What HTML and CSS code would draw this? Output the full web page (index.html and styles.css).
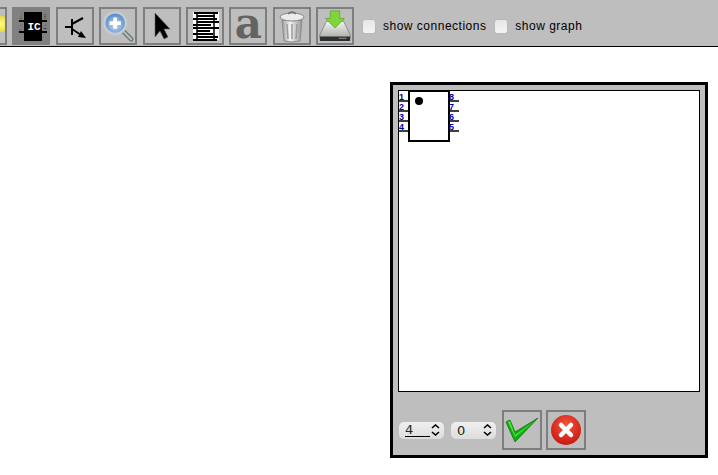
FILE: index.html
```html
<!DOCTYPE html>
<html lang="en">
<head>
  <meta charset="UTF-8">
  <title>Schematic editor</title>
  <link rel="stylesheet" href="styles.css">
</head>
<body>
  <div class="toolbar">
    <button class="tool tool-first">
      <svg width="34" height="34" viewBox="0 0 34 34"><defs><radialGradient id="bulb"><stop offset="0" stop-color="#fffb8a"/><stop offset="1" stop-color="#e8dc3a"/></radialGradient></defs><circle cx="30" cy="15" r="8" fill="url(#bulb)"/></svg>
    </button>
    <button class="tool tool-active">
      <svg width="34" height="34" viewBox="0 0 34 34">
        <rect x="10" y="3" width="18" height="29" fill="#000"/>
        <path d="M5 12h5M5 23h5M28 12h5M28 23h5" stroke="#000" stroke-width="2"/>
        <text x="20" y="20.500" class="chip-name">IC</text>
        <text x="5" y="10" class="chip-pin">1</text>
        <text x="29" y="10" class="chip-pin">8</text>
        <text x="5" y="21" class="chip-pin">2</text>
        <text x="29" y="21" class="chip-pin">4</text>
      </svg>
    </button>
    <button class="tool">
      <svg width="34" height="34" viewBox="0 0 34 34">
        <path d="M7 18h7M14 10v16M14 15l11-6M14 20l9 6" stroke="#000" stroke-width="2" fill="none"/>
        <path d="M28 29l-8-1 3-6z" fill="#000"/>
      </svg>
    </button>
    <button class="tool">
      <svg width="36" height="36" viewBox="0 0 36 36">
        <defs><radialGradient id="lens" cx="0.5" cy="0.6" r="0.6"><stop offset="0" stop-color="#c2dcf2"/><stop offset="1" stop-color="#4a7fc4"/></radialGradient></defs>
        <path d="M24 24l8 8" stroke="#6f7a7a" stroke-width="5" stroke-linecap="round"/>
        <path d="M24 24l8 8" stroke="#b8c0bc" stroke-width="2" stroke-linecap="round"/>
        <circle cx="15" cy="15" r="11.500" fill="url(#lens)" stroke="#c3ccd3" stroke-width="2.500"/>
        <path d="M13 9h4v4h4v4h-4v4h-4v-4H9v-4h4z" fill="#fff"/>
      </svg>
    </button>
    <button class="tool">
      <svg width="34" height="34" viewBox="0 0 34 34">
        <path d="M10 4v24l5-6 4 8 4-2-4-8h6z" fill="#000" stroke="#666" stroke-width="0.600"/>
      </svg>
    </button>
    <button class="tool">
      <svg width="34" height="34" viewBox="0 0 34 34">
        <rect x="5" y="3" width="26" height="28" fill="#fff"/>
        <path d="M6 4h24M9 7h18M5 10h24M9 13h22M5 16h18M5 19h26M9 22h13M5 25h20M9 28h21M5 31h24" stroke="#000" stroke-width="2"/>
        <path d="M9 3v28M26 3v28" stroke="#000" stroke-width="1.500"/>
      </svg>
    </button>
    <button class="tool">
      <span class="letter-icon">a</span>
    </button>
    <button class="tool">
      <svg width="34" height="36" viewBox="0 0 34 36">
        <defs><linearGradient id="can" x1="0" x2="1" y1="0" y2="0"><stop offset="0" stop-color="#9a9a9a"/><stop offset="0.4" stop-color="#f4f4f4"/><stop offset="1" stop-color="#959595"/></linearGradient></defs>
        <path d="M7 12h20l-2 21q-8 2-16 0z" fill="url(#can)" stroke="#8a8a8a"/>
        <path d="M12 16l1 15M17 16v15M22 16l-1 15" stroke="#9c9c9c" stroke-width="1.500"/>
        <ellipse cx="17" cy="9" rx="12" ry="4" fill="#ececec" stroke="#858585"/>
        <path d="M13 6q4-4 8 0" fill="none" stroke="#707070" stroke-width="1.600"/>
      </svg>
    </button>
    <button class="tool">
      <svg width="36" height="36" viewBox="0 0 36 36">
        <defs><linearGradient id="drive" x1="0" x2="0" y1="0" y2="1"><stop offset="0" stop-color="#f2f4f0"/><stop offset="1" stop-color="#a8aca6"/></linearGradient></defs>
        <path d="M9 13h18l7 14v4H2v-4z" fill="url(#drive)" stroke="#777" stroke-width="0.800"/>
        <path d="M2 29h32v4q0 1-1 1H3q-1 0-1-1z" fill="#2d2f2e"/>
        <path d="M22 31h8" stroke="#888" stroke-width="1.200"/>
        <path d="M13 2h10v8h5L18 20 8 10h5z" fill="#7ed63a" stroke="#5da52a" stroke-width="0.800"/>
      </svg>
    </button>
    <label class="check-label check-first"><input type="checkbox"> show connections</label>
    <label class="check-label"><input type="checkbox"> show graph</label>
  </div>

  <div class="dialog">
    <div class="canvas">
      <svg width="70" height="60" viewBox="0 0 70 60">
        <rect x="10" y="0" width="40" height="50" fill="#fff" stroke="#000" stroke-width="2"/>
        <circle cx="20" cy="10" r="4" fill="#000"/>
        <path d="M0 10h10M0 20h10M0 30h10M0 40h10M50 10h10M50 20h10M50 30h10M50 40h10" stroke="#000" stroke-width="1.500"/>
        <text x="0" y="9" class="pin-no">1</text>
        <text x="0" y="19" class="pin-no">2</text>
        <text x="0" y="29" class="pin-no">3</text>
        <text x="0" y="39" class="pin-no">4</text>
        <text x="50" y="9" class="pin-no">8</text>
        <text x="50" y="19" class="pin-no">7</text>
        <text x="50" y="29" class="pin-no">6</text>
        <text x="50" y="39" class="pin-no">5</text>
      </svg>
    </div>
    <div class="dialog-actions">
      <div class="spin spin-wide"><span class="spin-value spin-under">4</span><svg width="9" height="12" viewBox="0 0 9 12"><path d="M1 4l3.500-3L8 4M1 8l3.500 3L8 8" fill="none" stroke="#000" stroke-width="1.600"/></svg></div>
      <div class="spin"><span class="spin-value">0</span><svg width="9" height="12" viewBox="0 0 9 12"><path d="M1 4l3.500-3L8 4M1 8l3.500 3L8 8" fill="none" stroke="#000" stroke-width="1.600"/></svg></div>
      <button class="tool tool-big">
        <svg width="36" height="36" viewBox="0 0 36 36">
          <path d="M2 10l4-2 5 12L34 6 11 30z" fill="#12ac12" stroke="#0d7a0d" stroke-width="0.800"/>
          <path d="M4 10l2-1 5 14L31 9 11 25z" fill="#4fe03e"/>
        </svg>
      </button>
      <button class="tool tool-big">
        <svg width="36" height="36" viewBox="0 0 36 36">
          <defs><radialGradient id="stop" cx="0.5" cy="0.35" r="0.7"><stop offset="0" stop-color="#f6543f"/><stop offset="1" stop-color="#c3150e"/></radialGradient></defs>
          <circle cx="18" cy="18" r="15" fill="url(#stop)"/>
          <path d="M13 13l10 10M23 13L13 23" stroke="#fff" stroke-width="4.500" stroke-linecap="round"/>
        </svg>
      </button>
    </div>
  </div>
</body>
</html>
```

FILE: styles.css
```css
body {
  margin: 0;
  background-color: #fff;
  font-family: "Liberation Sans", Arial, sans-serif;
  overflow: hidden;
}

.toolbar {
  display: flex;
  align-items: center;
  gap: 5.400px;
  height: 40px;
  padding-top: 6px;
  background-color: #bebebe;
  border-bottom: 1px solid #000;
  overflow: hidden;
}

.tool {
  display: flex;
  align-items: center;
  justify-content: center;
  flex: none;
  box-sizing: border-box;
  width: 38px;
  height: 38px;
  margin: 0;
  padding: 0;
  background-color: #bebebe;
  border: 2px solid #7e7e7e;
}

.tool-first {
  margin-left: -31px;
}

.tool-active {
  background-color: #808080;
  border-color: #808080;
}

.chip-name {
  font-family: "Liberation Mono", monospace;
  font-size: 11px;
  font-weight: bold;
  fill: #fff;
  text-anchor: middle;
}

.chip-pin {
  font-family: "Liberation Sans", sans-serif;
  font-size: 7px;
  fill: #000;
  stroke: #ddd;
  stroke-width: 0.200px;
}

.letter-icon {
  font-family: "DejaVu Serif", serif;
  font-size: 42px;
  font-weight: bold;
  line-height: 34px;
  color: #626462;
  margin-top: -4px;
}

.check-label {
  display: flex;
  align-items: center;
  gap: 8px;
  font-size: 12px;
  letter-spacing: 0.500px;
  color: #000;
}

.check-first {
  margin-left: 3.500px;
  margin-right: 3.500px;
}

.check-label input {
  appearance: none;
  width: 12px;
  height: 13px;
  margin: 0;
  background: linear-gradient(#e6e6e6, #f4f4f4);
  border-radius: 2px;
  box-shadow: 0 0 1px #8a8a8a;
}

.dialog {
  position: absolute;
  left: 390px;
  top: 82px;
  box-sizing: border-box;
  width: 318px;
  height: 376px;
  padding: 5px;
  background-color: #bebebe;
  border: 3px solid #000;
}

.canvas {
  box-sizing: border-box;
  width: 302px;
  height: 302px;
  background-color: #fff;
  border: 1px solid #000;
}

.canvas svg {
  display: block;
}

.pin-no {
  font-family: "Liberation Sans", sans-serif;
  font-size: 9px;
  font-weight: bold;
  fill: #0000a8;
}

.dialog-actions {
  display: flex;
  align-items: center;
  gap: 6px;
  margin-top: 18px;
  padding-left: 1px;
}

.spin {
  display: flex;
  align-items: center;
  justify-content: space-between;
  box-sizing: border-box;
  width: 45px;
  height: 17px;
  padding: 0 4px 0 6px;
  background: linear-gradient(#f0f0f0, #dcdcdc);
  border-radius: 5px;
  font-family: "DejaVu Sans", sans-serif;
  font-size: 13px;
  color: #222;
}

.spin-wide {
  margin-right: 1px;
}

.spin-under {
  flex: 1;
  margin-right: 1px;
  border-bottom: 1px solid #000;
  line-height: 13px;
}

.tool-big {
  width: 40px;
  height: 40px;
}

.tool-big:last-child {
  margin-left: -2px;
}
```
